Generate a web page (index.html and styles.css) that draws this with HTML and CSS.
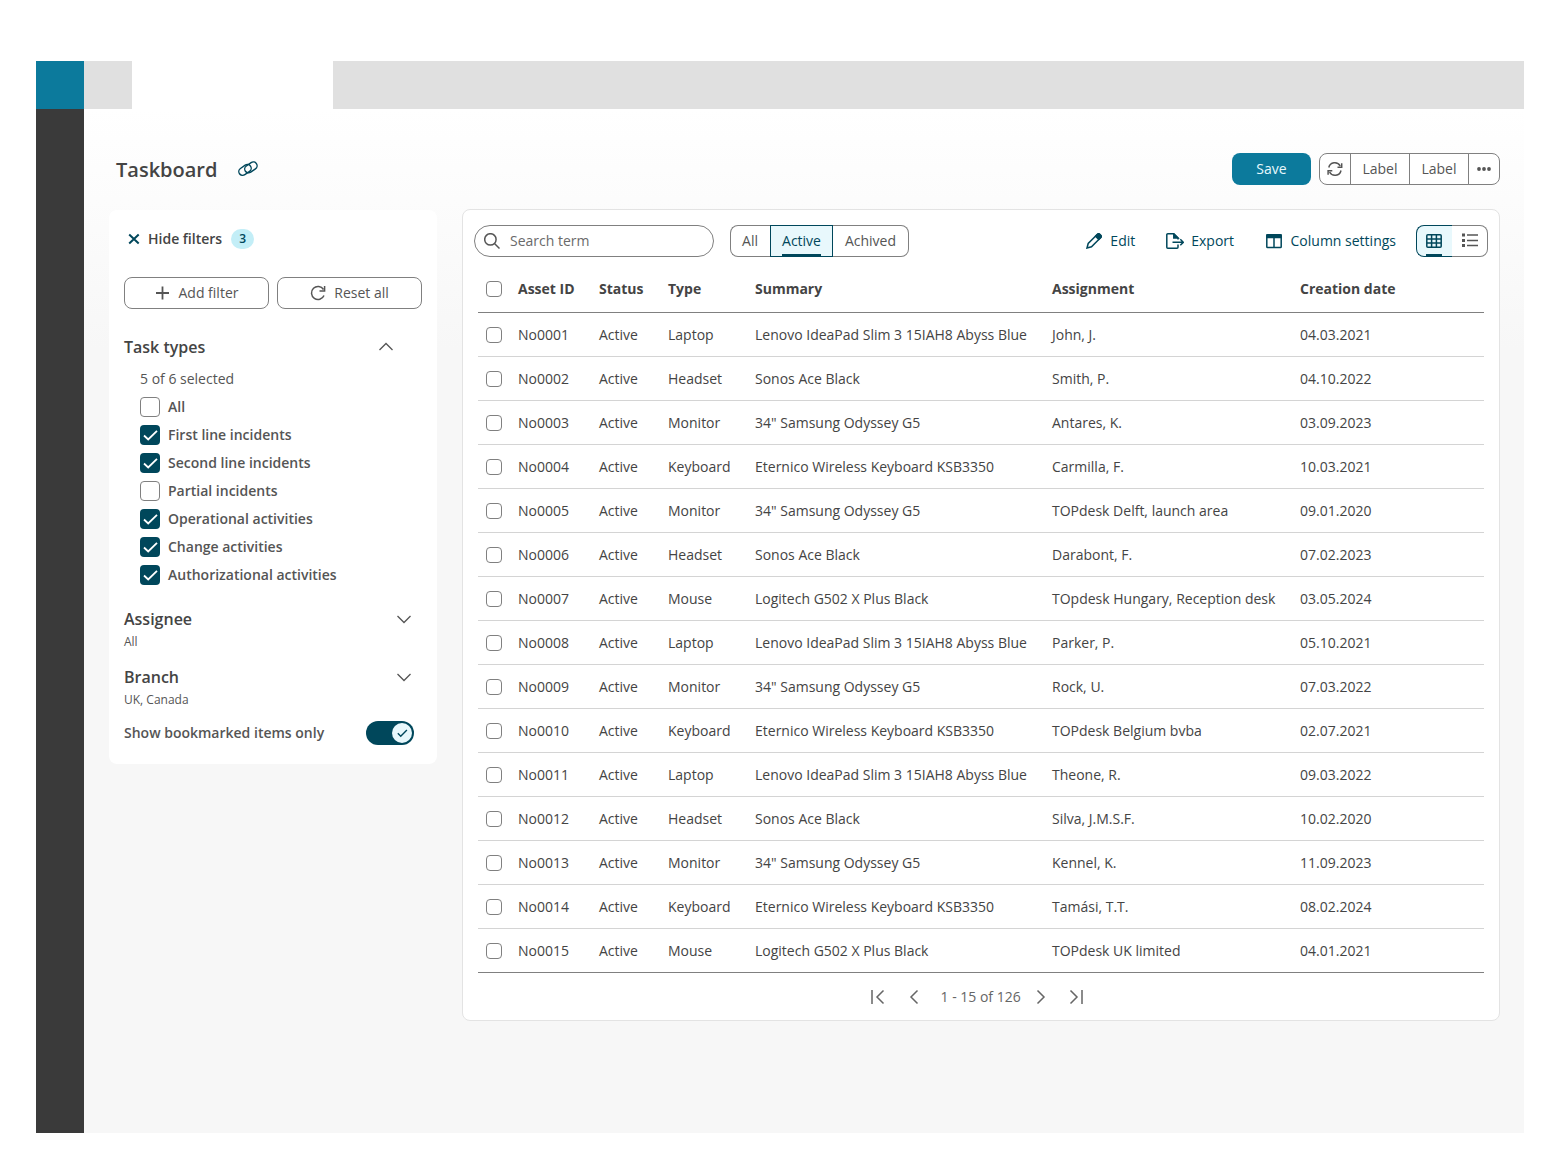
FILE: index.html
```html
<!DOCTYPE html>
<html lang="en">
<head>
    <meta charset="UTF-8">
    <meta name="viewport" content="width=device-width, initial-scale=1.0">
    <title>Taskboard</title>
    <link rel="stylesheet" href="styles.css">
</head>
<body>
    <svg class="sprite">
        <symbol id="check" viewBox="0 0 20 20"><path d="M4 10.500l4.200 4L17 5.800" /></symbol>
        <symbol id="chevron" viewBox="0 0 16 16"><path d="M1.500 5L8 11.500l6.500-6.500" /></symbol>
    </svg>

    <div class="app">
        <div class="topbar">
            <div class="logo"></div>
            <div class="home-tab"></div>
            <div class="active-tab"></div>
            <div class="tab-space"></div>
        </div>
        <div class="body">
            <nav class="sidebar"></nav>
            <main class="content">
                <header class="page-header">
                    <h1>Taskboard</h1>
                    <svg class="icon link" viewBox="0 0 20 20"><rect x="0.300" y="7.100" width="13.400" height="7.600" rx="3.800" transform="rotate(-35 7 10.900)" /><rect x="6.200" y="4.600" width="13.400" height="7.600" rx="3.800" transform="rotate(-35 12.900 8.400)" /></svg>
                    <div class="header-actions">
                        <button class="save">Save</button>
                        <div class="button-group">
                            <button class="small"><svg class="icon" viewBox="0 0 16 16"><path d="M1.800 6.500A6.100 6.100 0 0 1 13.200 5M14 9.500A6.100 6.100 0 0 1 2.600 11M14.700 2.200v4h-4.200M1.100 13.800v-4h4.200" /></svg></button>
                            <button>Label</button>
                            <button>Label</button>
                            <button class="small"><svg class="icon dots" viewBox="0 0 16 16"><circle cx="3" cy="8" r="1.900" /><circle cx="8" cy="8" r="1.900" /><circle cx="13" cy="8" r="1.900" /></svg></button>
                        </div>
                    </div>
                </header>

                <div class="columns">
                    <aside class="filters">
                        <div class="hide-filters">
                            <svg class="icon close" viewBox="0 0 12 12"><path d="M1.200 1.500l9.500 9M10.700 1.500l-9.500 9" /></svg>
                            <span>Hide filters</span>
                            <span class="badge">3</span>
                        </div>
                        <div class="filter-buttons">
                            <button><svg class="icon" viewBox="0 0 16 16"><path class="thick" d="M7.500 1.500v13M1 8h13" /></svg>Add filter</button>
                            <button><svg class="icon" viewBox="0 0 16 16"><path d="M14 10.500A6.500 6.500 0 1 1 13.500 4.500M14.600 1v5H9.500" /></svg>Reset all</button>
                        </div>

                        <section class="task-types">
                            <div class="section-title">
                                <h2>Task types</h2>
                                <svg class="icon chevron up"><use href="#chevron" /></svg>
                            </div>
                            <p class="selected-count">5 of 6 selected</p>
                            <ul>
                                <li><span class="box"></span>All</li>
                                <li><span class="box checked"><svg><use href="#check" /></svg></span>First line incidents</li>
                                <li><span class="box checked"><svg><use href="#check" /></svg></span>Second line incidents</li>
                                <li><span class="box"></span>Partial incidents</li>
                                <li><span class="box checked"><svg><use href="#check" /></svg></span>Operational activities</li>
                                <li><span class="box checked"><svg><use href="#check" /></svg></span>Change activities</li>
                                <li><span class="box checked"><svg><use href="#check" /></svg></span>Authorizational activities</li>
                            </ul>
                        </section>

                        <section class="collapsed">
                            <div class="section-title">
                                <h2>Assignee</h2>
                                <svg class="icon chevron"><use href="#chevron" /></svg>
                            </div>
                            <p>All</p>
                        </section>
                        <section class="collapsed">
                            <div class="section-title">
                                <h2>Branch</h2>
                                <svg class="icon chevron"><use href="#chevron" /></svg>
                            </div>
                            <p>UK, Canada</p>
                        </section>

                        <div class="bookmarked">
                            <span>Show bookmarked items only</span>
                            <span class="toggle"><span class="knob"><svg><use href="#check" /></svg></span></span>
                        </div>
                    </aside>

                    <section class="panel">
                        <div class="toolbar">
                            <div class="search">
                                <svg class="icon" viewBox="0 0 16 16"><circle cx="6.400" cy="6.400" r="5.700" /><path d="M10.500 10.500l5 5" /></svg>
                                <span>Search term</span>
                            </div>
                            <div class="segments">
                                <button>All</button>
                                <button class="active">Active</button>
                                <button>Achived</button>
                            </div>
                            <div class="actions">
                                <a class="edit"><svg class="icon" viewBox="0 0 16 16"><path d="M1 15l1.200-4.500L11.200 1.500a1.600 1.600 0 0 1 2.300 0l1 1a1.600 1.600 0 0 1 0 2.300L5.500 13.800z" /><path class="fill" d="M9.500 3.200l2-2c.7-.7 1.600-.7 2.300 0l1 1c.7.7.7 1.600 0 2.300l-2 2z" /></svg>Edit</a>
                                <a class="export"><svg class="icon" viewBox="0 0 18 16"><path d="M12 11.500v2.700a1 1 0 0 1-1 1H1.800a1 1 0 0 1-1-1V1.800a1 1 0 0 1 1-1h6L12 5v1.500M6.500 9.300h10.500M14.300 6.300L17.300 9.300l-3 3" /><path class="fill" d="M7.800 1v4H12z" /></svg>Export</a>
                                <a class="column-settings"><svg class="icon" viewBox="0 0 16 16"><rect x="0.800" y="1.800" width="14.400" height="12.800" rx="0.800" /><path d="M8 3v11" /><path class="fill" d="M1 2h14v2.500H1z" /></svg>Column settings</a>
                            </div>
                            <div class="view-switch">
                                <button class="active"><svg class="icon" viewBox="0 0 16 16"><rect x="0.800" y="1.800" width="14.400" height="12.400" rx="1" /><path d="M5.600 2v12M10.400 2v12M1 6h14M1 10h14" /></svg></button>
                                <button><svg class="icon list" viewBox="0 0 16 16"><path d="M5 2h11M5 7.500h11M5 12.500h11" /><path class="marks" d="M0 2h3M0 7.500h3M0 12.500h3" /></svg></button>
                            </div>
                        </div>

                        <table>
                            <colgroup>
                                <col class="col-check"><col class="col-id"><col class="col-status"><col class="col-type"><col class="col-summary"><col class="col-assignment"><col class="col-date">
                            </colgroup>
                            <thead>
                                <tr><th><span class="row-check"></span></th><th>Asset ID</th><th>Status</th><th>Type</th><th>Summary</th><th>Assignment</th><th>Creation date</th></tr>
                            </thead>
                            <tbody>
                                <tr><td><span class="row-check"></span></td><td>No0001</td><td>Active</td><td>Laptop</td><td>Lenovo IdeaPad Slim 3 15IAH8 Abyss Blue</td><td>John, J.</td><td>04.03.2021</td></tr>
                                <tr><td><span class="row-check"></span></td><td>No0002</td><td>Active</td><td>Headset</td><td>Sonos Ace Black</td><td>Smith, P.</td><td>04.10.2022</td></tr>
                                <tr><td><span class="row-check"></span></td><td>No0003</td><td>Active</td><td>Monitor</td><td>34" Samsung Odyssey G5</td><td>Antares, K.</td><td>03.09.2023</td></tr>
                                <tr><td><span class="row-check"></span></td><td>No0004</td><td>Active</td><td>Keyboard</td><td>Eternico Wireless Keyboard KSB3350</td><td>Carmilla, F.</td><td>10.03.2021</td></tr>
                                <tr><td><span class="row-check"></span></td><td>No0005</td><td>Active</td><td>Monitor</td><td>34" Samsung Odyssey G5</td><td>TOPdesk Delft, launch area</td><td>09.01.2020</td></tr>
                                <tr><td><span class="row-check"></span></td><td>No0006</td><td>Active</td><td>Headset</td><td>Sonos Ace Black</td><td>Darabont, F.</td><td>07.02.2023</td></tr>
                                <tr><td><span class="row-check"></span></td><td>No0007</td><td>Active</td><td>Mouse</td><td>Logitech G502 X Plus Black</td><td>TOpdesk Hungary, Reception desk</td><td>03.05.2024</td></tr>
                                <tr><td><span class="row-check"></span></td><td>No0008</td><td>Active</td><td>Laptop</td><td>Lenovo IdeaPad Slim 3 15IAH8 Abyss Blue</td><td>Parker, P.</td><td>05.10.2021</td></tr>
                                <tr><td><span class="row-check"></span></td><td>No0009</td><td>Active</td><td>Monitor</td><td>34" Samsung Odyssey G5</td><td>Rock, U.</td><td>07.03.2022</td></tr>
                                <tr><td><span class="row-check"></span></td><td>No0010</td><td>Active</td><td>Keyboard</td><td>Eternico Wireless Keyboard KSB3350</td><td>TOPdesk Belgium bvba</td><td>02.07.2021</td></tr>
                                <tr><td><span class="row-check"></span></td><td>No0011</td><td>Active</td><td>Laptop</td><td>Lenovo IdeaPad Slim 3 15IAH8 Abyss Blue</td><td>Theone, R.</td><td>09.03.2022</td></tr>
                                <tr><td><span class="row-check"></span></td><td>No0012</td><td>Active</td><td>Headset</td><td>Sonos Ace Black</td><td>Silva, J.M.S.F.</td><td>10.02.2020</td></tr>
                                <tr><td><span class="row-check"></span></td><td>No0013</td><td>Active</td><td>Monitor</td><td>34" Samsung Odyssey G5</td><td>Kennel, K.</td><td>11.09.2023</td></tr>
                                <tr><td><span class="row-check"></span></td><td>No0014</td><td>Active</td><td>Keyboard</td><td>Eternico Wireless Keyboard KSB3350</td><td>Tamási, T.T.</td><td>08.02.2024</td></tr>
                                <tr><td><span class="row-check"></span></td><td>No0015</td><td>Active</td><td>Mouse</td><td>Logitech G502 X Plus Black</td><td>TOPdesk UK limited</td><td>04.01.2021</td></tr>
                            </tbody>
                        </table>

                        <div class="pagination">
                            <svg class="icon first" viewBox="0 0 16 16"><path d="M2 1v14M13.500 1.500L7 8l6.500 6.500" /></svg>
                            <svg class="icon prev" viewBox="0 0 16 16"><path d="M11.500 1.500L5 8l6.500 6.500" /></svg>
                            <span>1 - 15 of 126</span>
                            <svg class="icon next" viewBox="0 0 16 16"><path d="M4.500 1.500L11 8l-6.500 6.500" /></svg>
                            <svg class="icon last" viewBox="0 0 16 16"><path d="M14 1v14M2.500 1.500L9 8l-6.500 6.500" /></svg>
                        </div>
                    </section>
                </div>
            </main>
        </div>
    </div>
</body>
</html>
```
FILE: styles.css
```css
* {
    box-sizing: border-box;
}
body {
    font-family: "Open Sans", sans-serif;
    font-size: 14px;
    line-height: 20px;
    color: #444;
    background: #fff;
    margin: 0;
    padding: 61px 34px 41px 36px;
}
h1, h2, p, ul {
    margin: 0;
    padding: 0;
}
button {
    font: inherit;
    color: #555;
    background: #fff;
    border: 1px solid #808080;
    padding: 0;
    display: flex;
    align-items: center;
    justify-content: center;
}
.sprite {
    display: none;
}
.icon {
    width: 16px;
    height: 16px;
    flex: none;
    fill: none;
    stroke: currentColor;
    stroke-width: 1.5;
}
.icon .fill {
    fill: currentColor;
}

/* Window frame */
.app {
    height: 1072px;
    display: flex;
    flex-direction: column;
}
.topbar {
    display: flex;
    height: 48px;
}
.logo {
    width: 48px;
    background: #0c7a9c;
}
.home-tab {
    width: 48px;
    background: #e0e0e0;
}
.active-tab {
    width: 201px;
}
.tab-space {
    flex: 1;
    background: #e0e0e0;
}
.body {
    flex: 1;
    display: flex;
}
.sidebar {
    width: 48px;
    background: #3a3a3a;
}
.content {
    flex: 1;
    padding: 44px 24px 0 25px;
    background: linear-gradient(#fff, #f7f7f7 240px);
}

/* Page header */
.page-header {
    display: flex;
    align-items: center;
    height: 32px;
    padding-left: 7px;
}
.page-header h1 {
    font-size: 20px;
    font-weight: 600;
    line-height: 28px;
    width: 101px;
    color: #444;
    padding-top: 2px;
}
.link {
    width: 20px;
    height: 20px;
    margin-left: 21px;
    color: #00475b;
    stroke-width: 1.4;
}
.header-actions {
    display: flex;
    gap: 8px;
    margin-left: auto;
}
.save {
    width: 79px;
    height: 32px;
    color: #e8f8fc;
    background: #0c7a9c;
    border: none;
    border-radius: 8px;
}
.button-group {
    display: flex;
}
.button-group button {
    width: 60px;
    height: 32px;
    margin-left: -1px;
}
.button-group .small {
    width: 32px;
}
.button-group button:first-child {
    margin-left: 0;
    border-radius: 8px 0 0 8px;
}
.button-group button:last-child {
    border-radius: 0 8px 8px 0;
}
.dots {
    fill: currentColor;
    stroke: none;
}

.columns {
    display: flex;
    align-items: flex-start;
    gap: 25px;
    margin-top: 24px;
}

/* Filters */
.filters {
    width: 328px;
    height: 554px;
    margin-top: 1px;
    padding: 19px 15px;
    background: #fff;
    border-radius: 8px;
}
.hide-filters {
    display: flex;
    align-items: center;
    height: 20px;
    font-weight: 600;
    padding-left: 4px;
}
.close {
    width: 12px;
    height: 12px;
    margin-right: 8px;
    color: #00475b;
    stroke-width: 2;
}
.badge {
    width: 23px;
    height: 20px;
    margin-left: 9px;
    font-size: 12px;
    text-align: center;
    color: #00475b;
    background: #c3eef7;
    border-radius: 10px;
}
.filter-buttons {
    display: flex;
    gap: 8px;
    margin-top: 28px;
}
.filter-buttons button {
    width: 145px;
    height: 32px;
    gap: 8px;
    border-radius: 8px;
}
.thick {
    stroke-width: 1.8;
}
.section-title {
    display: flex;
    align-items: center;
    justify-content: space-between;
    height: 24px;
    padding-right: 10.5px;
}
.section-title h2 {
    font-size: 16px;
    font-weight: 600;
    line-height: 24px;
}
.chevron {
    color: #555;
    stroke-width: 1.3;
}
.chevron.up {
    margin-right: 18px;
    transform: rotate(180deg);
}
.task-types {
    margin-top: 26px;
    color: #555;
}
.task-types h2 {
    color: #444;
}
.selected-count {
    margin: 10px 0 4px 16px;
}
.task-types ul {
    list-style: none;
    margin-left: 16px;
    font-weight: 600;
}
.task-types li {
    display: flex;
    align-items: center;
    height: 28px;
    gap: 8px;
}
.box {
    width: 20px;
    height: 20px;
    border: 1px solid #808080;
    border-radius: 4px;
}
.box.checked {
    border: none;
    background: #00475b;
}
.box svg {
    display: block;
    width: 20px;
    height: 20px;
    fill: none;
    stroke: #fff;
    stroke-width: 1.8;
}
.collapsed {
    height: 58px;
}
.task-types + .collapsed {
    margin-top: 18px;
}
.collapsed p {
    font-size: 12px;
    line-height: 22px;
    color: #555;
}
.bookmarked {
    display: flex;
    align-items: center;
    justify-content: space-between;
    height: 24px;
    margin-top: -2px;
    padding-right: 8px;
    font-weight: 600;
    color: #555;
}
.toggle {
    width: 48px;
    height: 24px;
    padding: 2px;
    display: flex;
    justify-content: flex-end;
    border-radius: 12px;
    background: #00475b;
}
.knob {
    width: 20px;
    height: 20px;
    padding: 3px;
    border-radius: 50%;
    background: #e8f8fc;
}
.knob svg {
    display: block;
    width: 14px;
    height: 14px;
    fill: none;
    stroke: #00475b;
    stroke-width: 2;
}

/* Table panel */
.panel {
    flex: 1;
    height: 812px;
    padding: 15px 11px 0;
    background: #fff;
    border: 1px solid #e3e3e3;
    border-radius: 8px;
}
.toolbar {
    display: flex;
    align-items: center;
    height: 32px;
}
.search {
    display: flex;
    align-items: center;
    width: 240px;
    height: 32px;
    padding-left: 9px;
    gap: 10px;
    color: #6a6a6a;
    border: 1px solid #808080;
    border-radius: 16px;
}
.search .icon {
    color: #555;
}
.segments {
    display: flex;
    margin-left: 16px;
}
.segments button {
    height: 32px;
    width: 41px;
}
.segments button:first-child {
    border-right: none;
    border-radius: 8px 0 0 8px;
    width: 40px;
    padding-right: 1px;
}
.segments button:last-child {
    width: 76px;
    border-left: none;
    border-radius: 0 8px 8px 0;
}
.segments .active {
    width: 63px;
}
.segments .active,
.view-switch .active {
    position: relative;
    color: #00475b;
    border-color: #00475b;
    background: #e8f8fc;
}
.segments .active::after,
.view-switch .active::after {
    content: "";
    position: absolute;
    left: 11px;
    right: 11px;
    bottom: -1px;
    height: 3px;
    background: #00475b;
}
.actions {
    display: flex;
    gap: 31px;
    margin-left: auto;
    margin-right: 20px;
    color: #00475b;
}
.actions a {
    display: flex;
    align-items: center;
    gap: 8px;
}
.export .icon {
    width: 18px;
}
.actions .export {
    gap: 7px;
    margin-right: 1px;
}
.actions .column-settings {
    gap: 8.5px;
}
.view-switch {
    display: flex;
}
.view-switch button {
    width: 36px;
    height: 32px;
    border-left: none;
    border-radius: 0 8px 8px 0;
}
.view-switch .active {
    border: 1px solid #00475b;
    border-right: none;
    border-radius: 8px 0 0 8px;
    padding-right: 1px;
}
.view-switch .active::after {
    left: 9px;
    right: 10px;
}
.list .marks {
    stroke-width: 3;
}

table {
    width: 1006px;
    margin: 8px 0 0 4px;
    table-layout: fixed;
    border-collapse: separate;
    border-spacing: 0;
}
.col-check { width: 40px; }
.col-id { width: 81px; }
.col-status { width: 69px; }
.col-type { width: 87px; }
.col-summary { width: 297px; }
.col-assignment { width: 248px; }
.col-date { width: 184px; }
th, td {
    height: 44px;
    padding: 0;
    text-align: left;
    white-space: nowrap;
    vertical-align: middle;
    border-bottom: 1px solid #d4d4d4;
}
th {
    height: 48px;
    font-weight: 700;
    border-bottom-color: #808080;
}
tbody tr:last-child td {
    border-bottom-color: #808080;
}
.row-check {
    display: block;
    width: 16px;
    height: 16px;
    margin-left: 8px;
    border: 1px solid #808080;
    border-radius: 4px;
}

.pagination {
    display: flex;
    align-items: center;
    height: 48px;
    padding-left: 396px;
    color: #666;
}
.pagination .prev {
    margin-left: 20px;
}
.pagination span {
    margin: 0 12px 0 18.5px;
}
.pagination .last {
    margin-left: 19.5px;
}
```
